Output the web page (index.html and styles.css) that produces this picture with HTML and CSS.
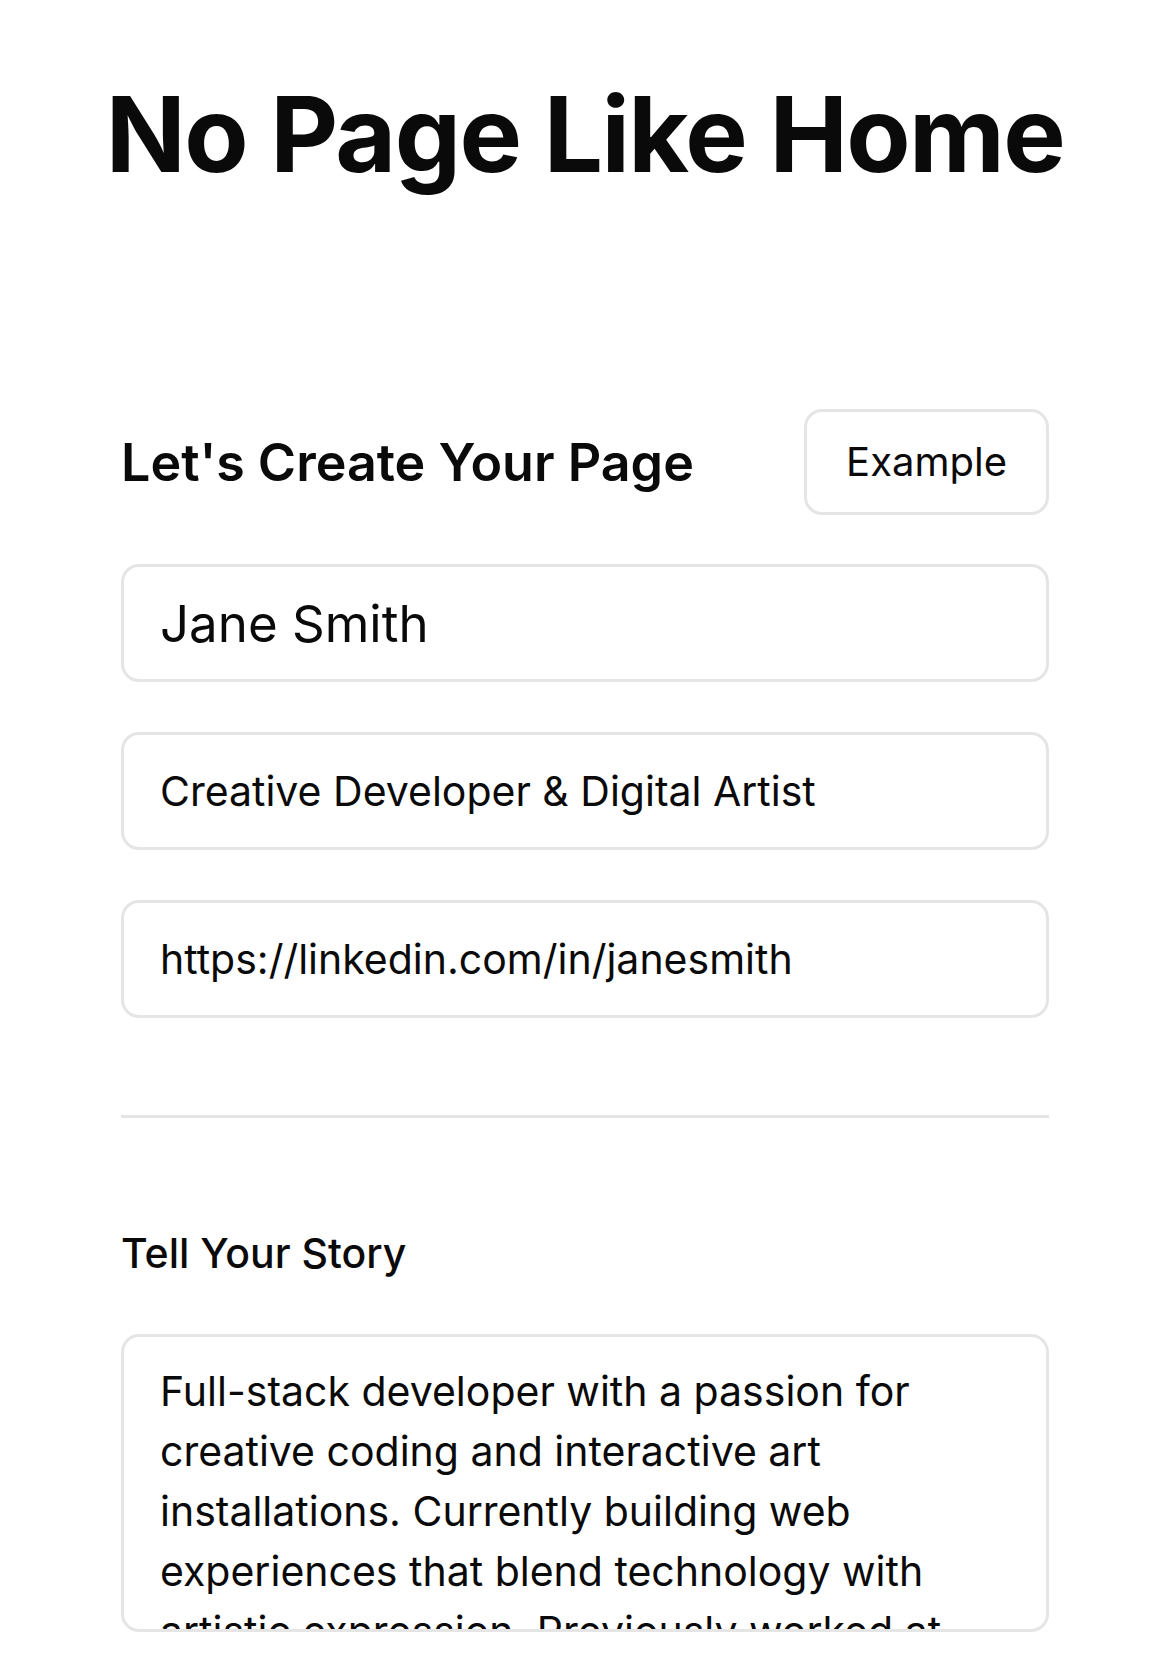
FILE: index.html
```html
<!DOCTYPE html>
<html lang="en">
<head>
    <meta charset="UTF-8">
    <meta name="viewport" content="width=device-width, initial-scale=1.0">
    <title>No Page Like Home</title>
    <link rel="stylesheet" href="styles.css">
</head>
<body>

    <header class="masthead">
        <h1 class="title">No Page Like Home</h1>
    </header>

    <main class="page">
        <section class="builder">
            <div class="builder-head">
                <h2 class="builder-title">Let's Create Your Page</h2>
                <button class="example-btn" type="button">Example</button>
            </div>

            <input class="field field-name" type="text" value="Jane Smith">
            <input class="field" type="text" value="Creative Developer &amp; Digital Artist">
            <input class="field" type="text" value="https://linkedin.com/in/janesmith">

            <hr class="divider">

            <label class="story-label" for="story">Tell Your Story</label>
            <textarea class="story" id="story">Full-stack developer with a passion for creative coding and interactive art installations. Currently building web experiences that blend technology with artistic expression. Previously worked at studios and agencies on immersive installations.</textarea>
        </section>
    </main>

</body>
</html>
```

FILE: styles.css
```css
* {
    box-sizing: border-box;
}
body {
    margin: 0;
    background-color: #ffffff;
    color: #0a0a0a;
    font-family: Inter, "Noto Sans", sans-serif;
}
.masthead {
    padding-top: 71px;
    text-align: center;
}
.title {
    margin: 0;
    font-size: 105px;
    line-height: 1.2;
    font-weight: 700;
    letter-spacing: -1.6px;
    white-space: nowrap;
}
.page {
    padding: 0 121px;
}
.builder {
    display: flex;
    flex-direction: column;
    margin-top: 212px;
}
.builder-head {
    display: flex;
    align-items: center;
    justify-content: space-between;
}
.builder-title {
    margin: 0;
    font-size: 52px;
    font-weight: 600;
    letter-spacing: 0;
}
.example-btn {
    height: 106px;
    padding: 0 39px;
    border: 3px solid #e5e5e5;
    border-radius: 18px;
    background-color: #ffffff;
    color: #0a0a0a;
    font-family: inherit;
    font-size: 40px;
    line-height: 48px;
}
.field {
    display: block;
    width: 100%;
    height: 118px;
    margin-top: 50px;
    padding: 0 36px;
    border: 3px solid #e5e5e5;
    border-radius: 18px;
    color: #0a0a0a;
    font-family: inherit;
    font-size: 41px;
    outline: none;
}
.builder-head + .field {
    margin-top: 49px;
}
.field-name {
    font-size: 51px;
}
.divider {
    width: 100%;
    height: 3px;
    margin: 97px 0 0;
    border: 0;
    background-color: #e5e5e5;
}
.story-label {
    margin-top: 107px;
    font-size: 41px;
    line-height: 56px;
    font-weight: 500;
}
.story {
    width: 100%;
    height: 298px;
    margin-top: 53px;
    padding: 24px 36px;
    border: 3px solid #e5e5e5;
    border-radius: 18px;
    color: #0a0a0a;
    font-family: inherit;
    font-size: 41px;
    line-height: 60px;
    resize: none;
    overflow: hidden;
    outline: none;
}
```
